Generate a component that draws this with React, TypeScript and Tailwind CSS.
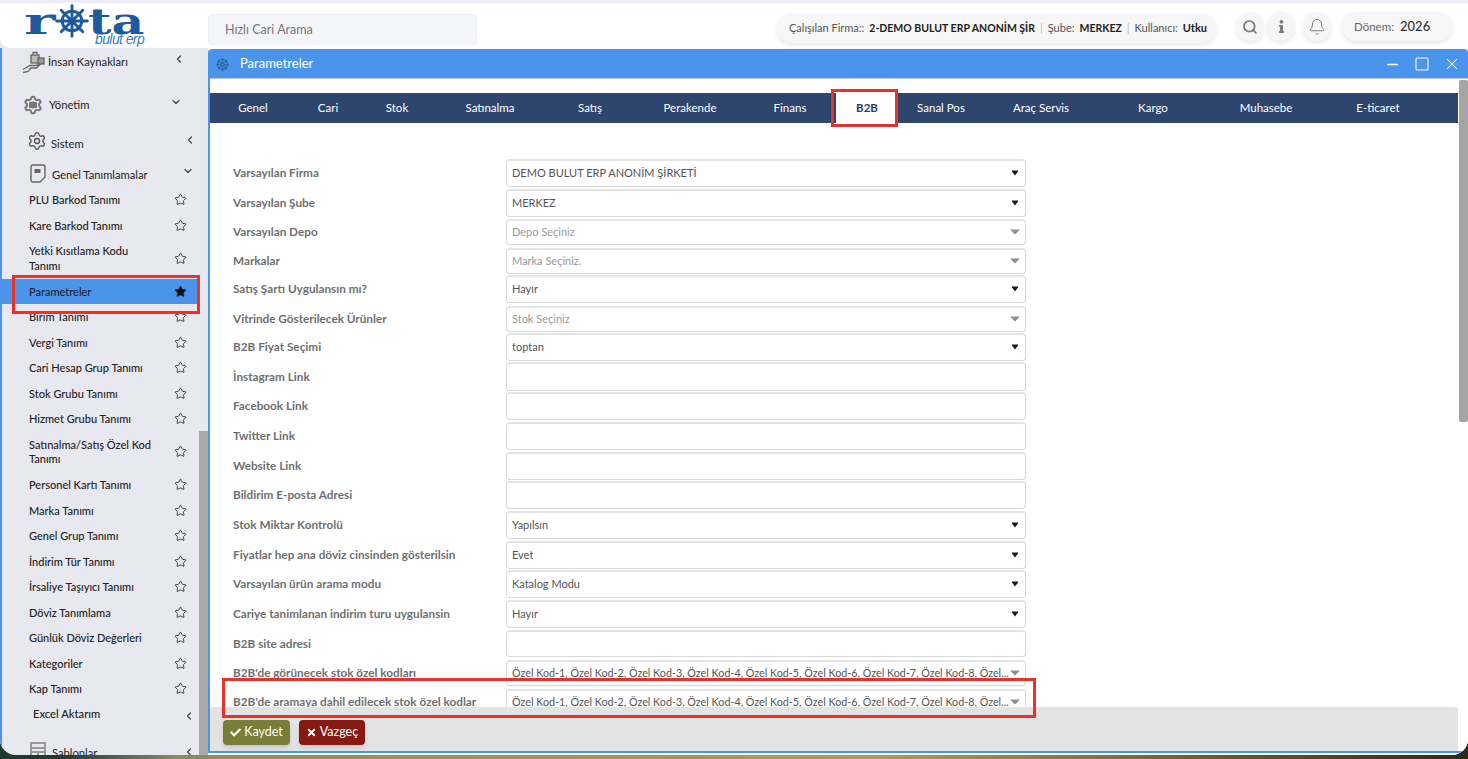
import { Bell, ChevronDown, ChevronLeft, Minus, Search, Settings, ShipWheel, Square, Star, X } from "lucide-react";
import { FaCheck, FaInfo, FaTimes } from "react-icons/fa";

const FONT = "font-['Lato','Noto_Sans',sans-serif]";

const tabs = [
  ["Genel", "w-[86px]"],
  ["Cari", "w-[64px]"],
  ["Stok", "w-[74px]"],
  ["Satınalma", "w-[112px]"],
  ["Satış", "w-[88px]"],
  ["Perakende", "w-[112px]"],
  ["Finans", "w-[88px]"],
  ["B2B", "w-[62px]"],
  ["Sanal Pos", "w-[86px]"],
  ["Araç Servis", "w-[114px]"],
  ["Kargo", "w-[110px]"],
  ["Muhasebe", "w-[116px]"],
  ["E-ticaret", "w-[108px]"],
];

type Row = { label: string; value?: string; kind: "select" | "placeholder" | "input"; row: string; box: string };

const KOD =
  "Özel Kod-1, Özel Kod-2, Özel Kod-3, Özel Kod-4, Özel Kod-5, Özel Kod-6, Özel Kod-7, Özel Kod-8, Özel...";

const rows: Row[] = [
  { label: "Varsayılan Firma", value: "DEMO BULUT ERP ANONİM ŞİRKETİ", kind: "select", row: "h-[30px]", box: "h-[28px]" },
  { label: "Varsayılan Şube", value: "MERKEZ", kind: "select", row: "h-[30px]", box: "h-[28px]" },
  { label: "Varsayılan Depo", value: "Depo Seçiniz", kind: "placeholder", row: "h-[29px]", box: "h-[26px]" },
  { label: "Markalar", value: "Marka Seçiniz.", kind: "placeholder", row: "h-[27px]", box: "h-[26px]" },
  { label: "Satış Şartı Uygulansın mı?", value: "Hayır", kind: "select", row: "h-[31px]", box: "h-[28px]" },
  { label: "Vitrinde Gösterilecek Ürünler", value: "Stok Seçiniz", kind: "placeholder", row: "h-[27px]", box: "h-[26px]" },
  { label: "B2B Fiyat Seçimi", value: "toptan", kind: "select", row: "h-[29px]", box: "h-[28px]" },
  { label: "İnstagram Link", kind: "input", row: "h-[30px]", box: "h-[29px]" },
  { label: "Facebook Link", kind: "input", row: "h-[30px]", box: "h-[28px]" },
  { label: "Twitter Link", kind: "input", row: "h-[30px]", box: "h-[28px]" },
  { label: "Website Link", kind: "input", row: "h-[29px]", box: "h-[28px]" },
  { label: "Bildirim E-posta Adresi", kind: "input", row: "h-[30px]", box: "h-[28px]" },
  { label: "Stok Miktar Kontrolü", value: "Yapılsın", kind: "select", row: "h-[30px]", box: "h-[28px]" },
  { label: "Fiyatlar hep ana döviz cinsinden gösterilsin", value: "Evet", kind: "select", row: "h-[29px]", box: "h-[28px]" },
  { label: "Varsayılan ürün arama modu", value: "Katalog Modu", kind: "select", row: "h-[30px]", box: "h-[28px]" },
  { label: "Cariye tanimlanan indirim turu uygulansin", value: "Hayır", kind: "select", row: "h-[30px]", box: "h-[28px]" },
  { label: "B2B site adresi", kind: "input", row: "h-[30px]", box: "h-[27px]" },
  { label: "B2B'de görünecek stok özel kodları", value: KOD, kind: "placeholder", row: "h-[29px]", box: "h-[26px]" },
  { label: "B2B'de aramaya dahil edilecek stok özel kodlar", value: KOD, kind: "placeholder", row: "h-[26px]", box: "h-[26px]" },
];

const menu: { label: string; tall?: boolean; active?: boolean }[] = [
  { label: "PLU Barkod Tanımı" },
  { label: "Kare Barkod Tanımı" },
  { label: "Yetki Kısıtlama Kodu\nTanımı", tall: true },
  { label: "Parametreler", active: true },
  { label: "Birim Tanımı" },
  { label: "Vergi Tanımı" },
  { label: "Cari Hesap Grup Tanımı" },
  { label: "Stok Grubu Tanımı" },
  { label: "Hizmet Grubu Tanımı" },
  { label: "Satınalma/Satış Özel Kod\nTanımı", tall: true },
  { label: "Personel Kartı Tanımı" },
  { label: "Marka Tanımı" },
  { label: "Genel Grup Tanımı" },
  { label: "İndirim Tür Tanımı" },
  { label: "İrsaliye Taşıyıcı Tanımı" },
  { label: "Döviz Tanımlama" },
  { label: "Günlük Döviz Değerleri" },
  { label: "Kategoriler" },
  { label: "Kap Tanımı" },
];

function Caret({ muted }: { muted: boolean }) {
  return muted ? (
    <svg width="10" height="6" viewBox="0 0 10 6" className="shrink-0">
      <path d="M0 0.5H10L5 5.5Z" fill="#8f8f8f" />
    </svg>
  ) : (
    <svg width="10" height="6" viewBox="0 0 10 6" className="shrink-0">
      <path d="M2 0.5H8V1.5L5 5.5L2 1.5Z" fill="#1a1a1a" />
    </svg>
  );
}

function Wheel({ className }: { className: string }) {
  return (
    <svg viewBox="0 0 40 40" className={className} fill="none" stroke="#1f5a9e">
      <circle cx="20" cy="20" r="11.5" strokeWidth="3.4" />
      <circle cx="20" cy="20" r="4" fill="#1f5a9e" strokeWidth="0" />
      <path
        d="M20 2V38M2 20H38M7.3 7.3L32.7 32.7M32.7 7.3L7.3 32.7"
        strokeWidth="3.4"
        strokeLinecap="round"
      />
    </svg>
  );
}

function Logo() {
  return (
    <div className="w-[208px] h-full shrink-0 pl-[24px] relative">
      <div className="flex items-center h-[38px] pt-[3px] font-['DejaVu_Serif',serif] font-bold text-[#1f5a9e] text-[35px]">
        <span className="w-[31px] h-[24px] leading-[20px] inline-block origin-left scale-x-[1.7]">r</span>
        <Wheel className="w-[34px] h-[34px] -mt-[5px] shrink-0" />
        <span className="h-[24px] leading-[20px] inline-block origin-left scale-x-[1.45] -ml-[1px]">ta</span>
      </div>
      <div className="absolute left-[95px] top-[29px] text-[14px] leading-none italic tracking-[-0.6px] text-[#2f7fc4] font-['Liberation_Sans',sans-serif]">
        bulut erp
      </div>
    </div>
  );
}

function HrIcon() {
  return (
    <svg width="26" height="24" viewBox="0 0 26 24" fill="none" stroke="#666" strokeWidth="1.3">
      <rect x="10" y="5" width="8" height="8" fill="#bbb" />
      <path d="M12 5V2.5H16V5" />
      <rect x="17" y="8" width="6" height="6" fill="#999" />
      <path d="M2 19.5L9 15.5H15L19 14.5L15.5 18H10L7 21.5L2 22.5" />
    </svg>
  );
}

function CogIcon() {
  return (
    <span className="relative w-[20px] h-[20px] block">
      <Settings size={20} strokeWidth={2.4} className="text-[#777]" />
      <span className="absolute left-[6px] top-[7px] w-[8px] h-[6px] rounded-[1px] bg-[#777]" />
    </span>
  );
}

function DocIcon() {
  return (
    <svg width="16" height="19" viewBox="0 0 16 19" fill="none" stroke="#666" strokeWidth="1.4">
      <path d="M3 1H13A2 2 0 0 1 15 3V13L10 18H3A2 2 0 0 1 1 16V3A2 2 0 0 1 3 1Z" />
      <rect x="4.5" y="5" width="6" height="4" fill="#666" stroke="none" />
    </svg>
  );
}

function TemplateIcon() {
  return (
    <svg width="16" height="20" viewBox="0 0 16 20" fill="#999">
      <path d="M0 0H16V20H0ZM2 2V5H14V2ZM2 7V9H14V7ZM2 11V18H7V11ZM9 11V14H14V11ZM9 16V18H14V16Z" fillRule="evenodd" />
    </svg>
  );
}

function Sidebar() {
  return (
    <aside className="relative w-[208px] shrink-0 h-full overflow-hidden bg-[#e8e8f0] text-[11.2px] text-[#222] border-l-2 border-[#4a94ec]">
      <div className="absolute -left-[2px] top-0 w-[2px] h-[34px] bg-[#e8e8f0]" />
      <div className="-ml-[2px] flex flex-col">
        <div className="h-[28px] flex items-center pl-[21px]">
          <HrIcon />
          <span className="ml-[1px] pt-[1px] w-[118px]">İnsan Kaynakları</span>
          <ChevronLeft size={12} strokeWidth={2.5} className="ml-[7px] -mt-[6px] text-[#444]" />
        </div>
        <div className="h-[34px] mt-[12px] flex items-center pl-[23px]">
          <CogIcon />
          <span className="ml-[6px] pt-[1px] w-[122px]">Yönetim</span>
          <ChevronDown size={12} strokeWidth={2.5} className="-ml-[1px] -mt-[6px] text-[#444]" />
        </div>
        <div className="h-[30px] mt-[6px] flex items-center pl-[27px]">
          <Settings size={20} strokeWidth={1.6} className="text-[#555] -mt-[4px]" />
          <span className="ml-[4px] w-[133px] pt-[2px]">Sistem</span>
          <ChevronLeft size={12} strokeWidth={2.5} className="-mt-[6px] text-[#444]" />
        </div>
        <div className="h-[28px] mt-[1px] flex items-center pl-[30px]">
          <DocIcon />
          <span className="ml-[6px] w-[130px] pt-[4px]">Genel Tanımlamalar</span>
          <ChevronDown size={12} strokeWidth={2.5} className="-mt-[4px] text-[#444]" />
        </div>
        {menu.map((m) => (
          <div
            key={m.label}
            className={`flex items-center pl-[29px] ${m.tall ? "h-[40.5px]" : "h-[25.5px]"} ${
              m.active ? "bg-[#4a94ec] w-[197px]" : ""
            }`}
          >
            <span className="w-[132px] pt-[1px] text-[11px] leading-[14.5px] font-medium whitespace-pre-line">{m.label}</span>
            <Star
              size={13}
              strokeWidth={1.5}
              className="ml-[13px] shrink-0 text-[#222]"
              fill={m.active ? "#111" : "none"}
            />
          </div>
        ))}
        <div className="h-[25px] flex items-center pl-[33px]">
          <span className="w-[150px] pt-[1px] font-medium">Excel Aktarım</span>
          <ChevronLeft size={12} strokeWidth={2.5} className="mt-[3px] text-[#444]" />
        </div>
        <div className="h-[30px] mt-[10px] flex items-center pl-[30px]">
          <TemplateIcon />
          <span className="ml-[6px] w-[131px] pt-[4px]">Şablonlar</span>
          <ChevronLeft size={12} strokeWidth={2.5} className="text-[#444]" />
        </div>
      </div>
      <div className="absolute left-[197px] top-[383px] bottom-0 w-[9px] bg-[#a9a9a9]" />
    </aside>
  );
}

function Field({ r }: { r: Row }) {
  const muted = r.kind === "placeholder";
  return (
    <div className={`flex items-start ${r.row}`}>
      <div className={`w-[273px] shrink-0 flex items-center text-[11.75px] font-bold text-[#6f6f6f] ${r.box}`}>
        {r.label}
      </div>
      <div
        className={`w-[520px] shrink-0 flex items-center justify-between pl-[5px] pr-[5px] pb-[1px] bg-white border border-[#d9d9d9] border-t-2 border-t-[#e4e4e4] rounded-[4px] ${r.box}`}
      >
        {r.value && (
          <span
            className={`truncate ${
              r.value === KOD ? "text-[10.75px] text-[#555]" : muted ? "text-[11px] text-[#9a9a9a]" : "text-[11px] text-[#555]"
            }`}
          >
            {r.value}
          </span>
        )}
        {r.kind !== "input" && <Caret muted={muted} />}
      </div>
    </div>
  );
}

function Window() {
  return (
    <main className="relative flex-1 min-w-0 h-[704px] flex flex-col overflow-hidden rounded-t-[4px] bg-white border-l-2 border-b-2 border-[#4a94ec]">
      <div className="h-[30px] -ml-[2px] pt-[1px] shrink-0 bg-[#4a94ec] flex items-center pl-[6px] text-white border-b border-[#bcc8d8]">
        <ShipWheel size={15} strokeWidth={1.9} className="ml-[1px] text-[#2c6aa8]" />
        <span className="ml-[10px] text-[13px]">Parametreler</span>
        <div className="ml-auto flex items-center gap-[13px] pr-[7px]">
          <Minus size={17} strokeWidth={1.8} />
          <Square size={16} strokeWidth={1.6} />
          <X size={18} strokeWidth={1.4} />
        </div>
      </div>
      <div className="flex-1 min-h-0 flex flex-col pt-[14px] pr-[10px]">
        <nav className="h-[30px] shrink-0 flex bg-[#2e466e] text-white text-[11.5px]">
          {tabs.map(([t, w]) =>
            t === "B2B" ? (
              <div key={t} className={`${w} h-full flex items-center justify-center bg-white text-[#2e3a66] font-bold ml-[2px]`}>
                {t}
              </div>
            ) : (
              <div key={t} className={`${w} h-full flex items-center justify-center`}>
                {t}
              </div>
            )
          )}
        </nav>
        <div className="flex-1 min-h-0 overflow-hidden pt-[36px] pl-[23px]">
          {rows.map((r) => (
            <Field key={r.label} r={r} />
          ))}
        </div>
        <div className="h-[44px] shrink-0 bg-[#e3e3e3] rounded-t-[3px] pl-[13px] pt-[13px] flex gap-[9px] text-white text-[12.5px]">
          <div className="w-[67px] h-[25px] rounded-[4px] bg-[#7a7d35] shadow-md flex items-center justify-center gap-[3px]">
            <FaCheck size={11} />
            Kaydet
          </div>
          <div className="w-[66px] h-[25px] rounded-[4px] bg-[#861a12] shadow-md flex items-center justify-center gap-[3px]">
            <FaTimes size={11} />
            Vazgeç
          </div>
        </div>
      </div>
      <div className="absolute right-0 top-[31px] w-[9px] h-[342px] bg-[#a5a5a5] rounded-[2px]" />
    </main>
  );
}

function Pill({ children, className }: { children: React.ReactNode; className: string }) {
  return (
    <div className={`bg-[#f6f6f6] rounded-full shadow-[0_2px_5px_rgba(0,0,0,0.1)] flex items-center whitespace-nowrap ${className}`}>
      {children}
    </div>
  );
}

export default function App() {
  return (
    <div className={`relative w-[1468px] h-[759px] overflow-hidden bg-[linear-gradient(90deg,#1c3a30_0%,#1c3a30_4%,#8a8a66_12%,#a89a66_60%,#4a4a30_90%,#2a2a1c_100%)] ${FONT}`}>
      <div className="h-[755px] bg-[#e8e8f0] rounded-b-[16px] overflow-hidden flex flex-col">
        <header className="relative h-[48px] shrink-0 bg-white rounded-bl-[10px] border-t-[3px] border-[#ececf6] flex items-start">
          <Logo />
          <div className="mt-[11px] w-[269px] h-[31px] rounded-[4px] bg-[#f4f5f9] border border-[#eceef3] flex items-center pl-[16px] pt-[2px] text-[12.5px] text-[#777]">
            Hızlı Cari Arama
          </div>
          <Pill className="ml-[300px] mt-[11px] w-[439px] h-[29px] pl-[12px] text-[11px] text-[#555]">
            <span>Çalışılan Firma::</span>
            <b className="text-[#222] text-[10.5px] ml-[5px]">2-DEMO BULUT ERP ANONİM ŞİR</b>
            <span className="text-[#bbb] mx-[5px]">|</span>
            <span>Şube:</span>
            <b className="text-[#222] text-[10.5px] ml-[5px]">MERKEZ</b>
            <span className="text-[#bbb] mx-[5px]">|</span>
            <span>Kullanıcı:</span>
            <b className="text-[#222] ml-[5px]">Utku</b>
          </Pill>
          <Pill className="ml-[21px] mt-[9px] w-[26px] h-[29px] justify-center">
            <Search size={16} strokeWidth={2.6} className="text-[#777]" />
          </Pill>
          <Pill className="ml-[5px] mt-[9px] w-[26px] h-[29px] justify-center">
            <FaInfo size={13} className="text-[#777]" />
          </Pill>
          <Pill className="ml-[9px] mt-[9px] w-[28px] h-[29px] justify-center">
            <Bell size={18} strokeWidth={1.3} className="text-[#777]" />
          </Pill>
          <Pill className="ml-[11px] mt-[9px] w-[110px] h-[29px] pl-[12px] gap-[6px] text-[11.5px] text-[#666]">
            <span>Dönem:</span>
            <b className="text-[13px] text-[#333] font-medium">2026</b>
          </Pill>
        </header>
        <div className="flex-1 min-h-0 flex">
          <Sidebar />
          <div className="flex-1 min-w-0 bg-white pt-[1px]">
            <Window />
          </div>
        </div>
      </div>
      <div className="absolute left-[12px] top-[275px] w-[188px] h-[39px] border-[3px] border-[#e8322a]" />
      <div className="absolute left-[831px] top-[89px] w-[67px] h-[38px] border-[3px] border-[#e8322a]" />
      <div className="absolute left-[222px] top-[678px] w-[814px] h-[40px] border-[3px] border-[#e8322a]" />
    </div>
  );
}
